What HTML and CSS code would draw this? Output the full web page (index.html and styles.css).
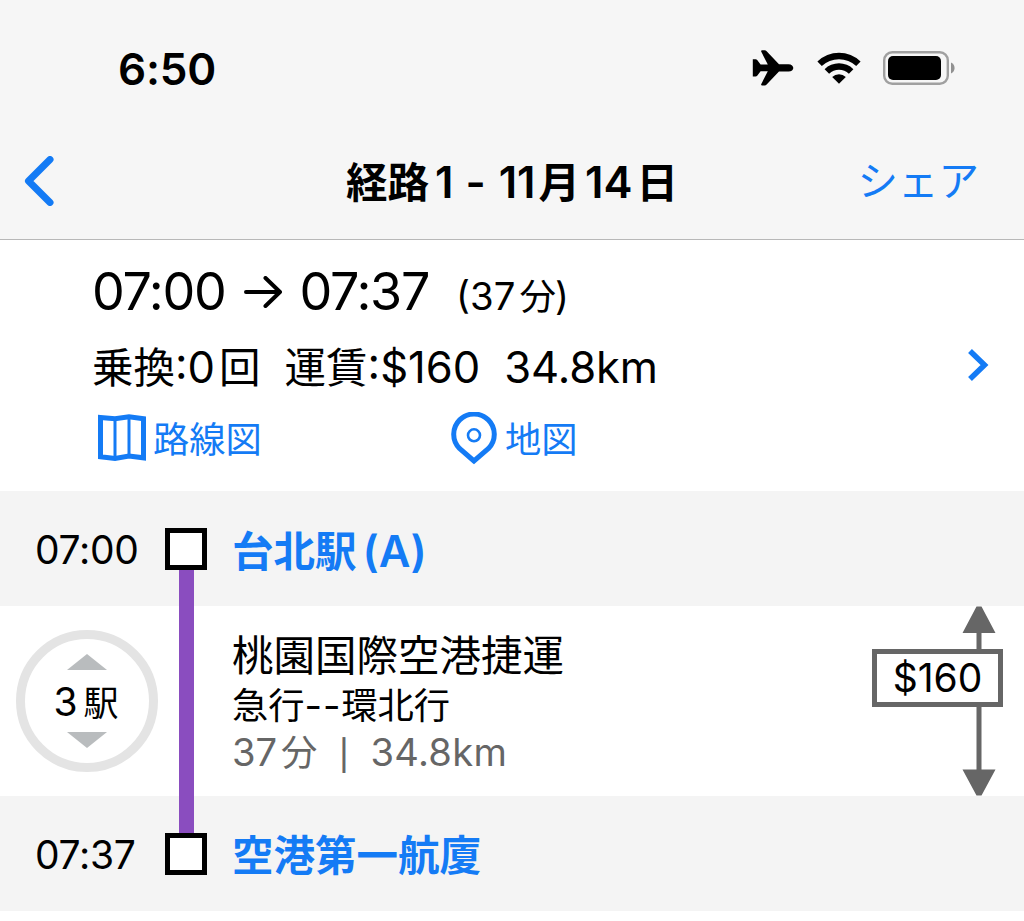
FILE: index.html
```
<!DOCTYPE html>
<html lang="ja">
<head>
    <meta charset="UTF-8">
    <meta name="viewport" content="width=device-width, initial-scale=1.0">
    <title>経路1 - 11月14日</title>
    <link rel="stylesheet" href="styles.css">
</head>
<body>

    <header class="header">
        <div class="status-bar">
            <span class="clock">6:50</span>
            <div class="status-icons">
                <svg class="plane" width="42" height="38" viewBox="0 0 42 38">
                    <path d="M0.8 10.2H3.6Q4.6 10.2 5.2 11L8.6 15.6H15.8L9.3 2.8Q8.6 1.3 10.2 1.3H12.8Q13.8 1.3 14.4 2L27 15.2H36.5C39.6 15.2 41.3 17.3 41.3 18.9C41.3 20.5 39.6 22.6 36.5 22.6H27L14.4 35.8Q13.8 36.5 12.8 36.5H10.2Q8.6 36.5 9.3 35L15.8 22.2H8.6L5.2 26.8Q4.6 27.6 3.6 27.6H0.8Z"/>
                </svg>
                <svg class="wifi" width="44" height="32" viewBox="0 0 44 32">
                    <path d="M0.4 9.6A31 31 0 0 1 43.6 9.6L39.2 14A25.2 25.2 0 0 0 4.8 14Z"/>
                    <path d="M7.6 17.2A20.5 20.5 0 0 1 36.4 17.2L31.9 21.7A14.5 14.5 0 0 0 12.1 21.7Z"/>
                    <path d="M15.2 25A10 10 0 0 1 28.8 25L22 31.8Z"/>
                </svg>
                <svg class="battery" width="72" height="34" viewBox="0 0 72 34">
                    <rect x="1.2" y="1.2" width="63.6" height="31.6" rx="8" fill="none" stroke="#a0a0a0" stroke-width="2.4"/>
                    <rect x="5" y="5" width="53" height="24" rx="5"/>
                    <path d="M68 11.5C72.8 13.8 72.8 20.2 68 22.5Z" fill="#919191"/>
                </svg>
            </div>
        </div>
        <nav class="nav-bar">
            <a class="back" href="#">
                <svg width="30" height="50" viewBox="0 0 30 50">
                    <path d="M26 3.5L4.5 25L26 46.5" fill="none" stroke="#147bf5" stroke-width="7" stroke-linecap="round" stroke-linejoin="round"/>
                </svg>
            </a>
            <h1>経路<span class="num n1">1</span><span class="num n2">-</span><span class="num n3">11</span>月<span class="num n4">14</span>日</h1>
            <a class="share" href="#">シェア</a>
        </nav>
    </header>

    <section class="summary">
        <div class="times">
            <span class="time-big">07:00</span>
            <svg class="arrow" width="38" height="32" viewBox="0 0 38 32">
                <path d="M2 16H36M21.5 2L36 16L21.5 30" fill="none" stroke="#000" stroke-width="4" stroke-linecap="round" stroke-linejoin="round"/>
            </svg>
            <span class="time-big">07:37</span>
            <span class="duration"><span class="num gap">(37</span>分<span class="num close">)</span></span>
        </div>
        <div class="details">
            <span class="transfers">乗換<span class="num gap">:0</span>回</span>
            <span class="fare">運賃<span class="num">:$160</span></span>
            <span class="num distance">34.8km</span>
            <svg class="chevron" width="22" height="32" viewBox="0 0 22 32">
                <path d="M3 2L17.5 16L3 30" fill="none" stroke="#147bf5" stroke-width="5.5"/>
            </svg>
        </div>
        <div class="links">
            <a class="link link-map" href="#">
                <svg width="48" height="48" viewBox="0 0 48 48" fill="none" stroke="#147bf5">
                    <path d="M2.5 3.4L17 4.7L31 2.7L45.5 4.7V43.8L31 42L17 44.5L2.5 42.8Z" stroke-width="5"/>
                    <path d="M17 4V44M31 3V43" stroke-width="3"/>
                </svg>
                <span>路線図</span>
            </a>
            <a class="link" href="#">
                <svg width="46" height="53" viewBox="0 0 46 53" fill="none" stroke="#147bf5">
                    <path d="M23 49L8.5 36.5A20.3 20.3 0 1 1 37.5 36.5Z" stroke-width="5"/>
                    <circle cx="23" cy="23.3" r="6" stroke-width="2.6"/>
                </svg>
                <span>地図</span>
            </a>
        </div>
    </section>

    <main class="route">
        <div class="station">
            <span class="time">07:00</span>
            <span class="stop"></span>
            <a class="name" href="#">台北駅<span class="num code">(A)</span></a>
        </div>

        <div class="leg">
            <div class="stops-cell">
                <div class="stops">
                    <svg width="40" height="16" viewBox="0 0 40 16"><path d="M20 0L40 16H0Z" fill="#b9bcbe"/></svg>
                    <span class="stop-count"><span class="num">3</span>駅</span>
                    <svg width="40" height="16" viewBox="0 0 40 16"><path d="M0 0H40L20 16Z" fill="#b9bcbe"/></svg>
                </div>
            </div>
            <div class="rail"></div>
            <div class="train">
                <div class="line-name">桃園国際空港捷運</div>
                <div class="service">急行<span class="num dash">--</span>環北行</div>
                <div class="info"><span class="num gap">37</span>分<span class="bar">|</span><span class="num km">34.8km</span></div>
            </div>
            <div class="price">
                <svg class="price-arrow" width="34" height="190" viewBox="0 0 34 190" fill="#666">
                    <path d="M14.5 0.5H19.5L33.5 27H19.5V163.5H33.5L19.5 189.5H14.5L0.5 163.5H14.5V27H0.5Z"/>
                </svg>
                <span class="price-box">$160</span>
            </div>
        </div>

        <div class="station">
            <span class="time">07:37</span>
            <span class="stop"></span>
            <a class="name" href="#">空港第一航廈</a>
        </div>
    </main>

</body>
</html>
```
FILE: styles.css
```
* {
    box-sizing: border-box;
}
body {
    margin: 0;
    background-color: #fff;
    color: #000;
    font-family: Inter, "Noto Sans CJK JP", sans-serif;
    line-height: 1;
    white-space: nowrap;
}
a {
    color: #147bf5;
    text-decoration: none;
}
svg {
    display: block;
    flex: none;
}
.num {
    font-size: 1.05em;
}
.gap {
    margin-right: 4px;
}

/* header */
.header {
    height: 240px;
    background-color: #f6f6f6;
    border-bottom: 1px solid #b8b8b8;
}
.status-bar {
    display: flex;
    justify-content: space-between;
    align-items: center;
    height: 136px;
    padding: 2px 69px 0 118px;
}
.clock {
    font-size: 44px;
    font-weight: 600;
    letter-spacing: -0.2px;
}
.status-icons {
    display: flex;
    align-items: center;
    margin-top: -2px;
}
.wifi {
    margin: 0 22px 0 23px;
}
.nav-bar {
    display: grid;
    grid-template-columns: 200px 1fr 200px;
    align-items: center;
    height: 90px;
    padding: 0 45px 0 24px;
}
.nav-bar h1 {
    margin: 4px 0 0;
    padding-left: 21px;
    font-size: 41.5px;
    font-weight: 600;
    text-align: center;
}
.n1 {
    margin-left: 6px;
}
.n2 {
    margin: 0 13px 0 12px;
}
.n3 {
    margin-right: 3px;
}
.n4 {
    margin: 0 4px 0 5px;
}
.share {
    margin-top: 2px;
    font-size: 40.5px;
    text-align: right;
}

/* summary */
.summary {
    height: 251px;
    padding: 22px 36px 0 92px;
}
.times {
    display: flex;
    align-items: center;
    height: 60px;
}
.time-big {
    font-size: 52px;
    letter-spacing: -1.3px;
}
.arrow {
    margin: 0 18px;
}
.duration {
    margin: 8px 0 0 27px;
    font-size: 36.5px;
}
.close {
    margin-left: -1px;
}
.details {
    display: flex;
    align-items: center;
    height: 86px;
    padding-top: 5px;
    font-size: 41.5px;
}
.fare {
    margin: 0 24px;
}
.distance {
    letter-spacing: -0.1px;
}
.chevron {
    margin: -5px -1px 0 auto;
}
.links {
    display: flex;
    height: 60px;
    padding-left: 6px;
}
.link {
    display: flex;
    align-items: center;
    gap: 8px;
    font-size: 36.3px;
}
.link span {
    padding-top: 5px;
}
.link-map {
    gap: 7px;
    width: 353px;
}

/* route */
.station {
    display: grid;
    grid-template-columns: 165px 67px 1fr;
    align-items: center;
    height: 115px;
    background-color: #f4f4f4;
}
.time {
    padding: 1px 0 0 35px;
    font-size: 39px;
    letter-spacing: -0.3px;
}
.stop {
    width: 42px;
    height: 42px;
    background-color: #fff;
    border: 5px solid #000;
}
.name {
    padding-top: 6px;
    font-size: 41.5px;
    font-weight: 600;
}
.code {
    margin-left: 6px;
}
.leg {
    display: grid;
    grid-template-columns: 179px 53px 1fr 152px;
    height: 190px;
}
.stops-cell {
    padding: 24px 0 0 16px;
}
.stops {
    display: flex;
    flex-direction: column;
    align-items: center;
    justify-content: space-between;
    width: 142px;
    height: 142px;
    padding: 15px 0;
    border: 9px solid #e4e4e4;
    border-radius: 50%;
    font-size: 35px;
}
.stop-count {
    padding: 1px 2px 0 0;
}
.stop-count .num {
    margin-right: 6px;
    font-size: 39px;
}
.rail {
    position: relative;
    width: 15px;
    margin: -36px 0 -37px;
    background-color: #8a4dbf;
}
.train {
    padding-top: 25px;
}
.line-name {
    height: 50px;
    font-size: 41.5px;
    line-height: 50px;
}
.service {
    height: 48px;
    font-size: 36.3px;
    line-height: 48px;
}
.dash {
    letter-spacing: 0.8px;
}
.info {
    height: 46px;
    color: #666;
    font-size: 36.3px;
    line-height: 46px;
}
.bar {
    display: inline-block;
    width: 53px;
    font-size: 30px;
    font-weight: 500;
    text-align: center;
}
.km {
    letter-spacing: 0.3px;
}
.price {
    display: grid;
}
.price-arrow {
    grid-area: 1 / 1;
    margin-left: 90px;
}
.price-box {
    grid-area: 1 / 1;
    width: 131px;
    height: 58px;
    margin-top: 43px;
    background-color: #fff;
    border: 5px solid #666;
    font-size: 39px;
    line-height: 48px;
    text-align: center;
}
```
